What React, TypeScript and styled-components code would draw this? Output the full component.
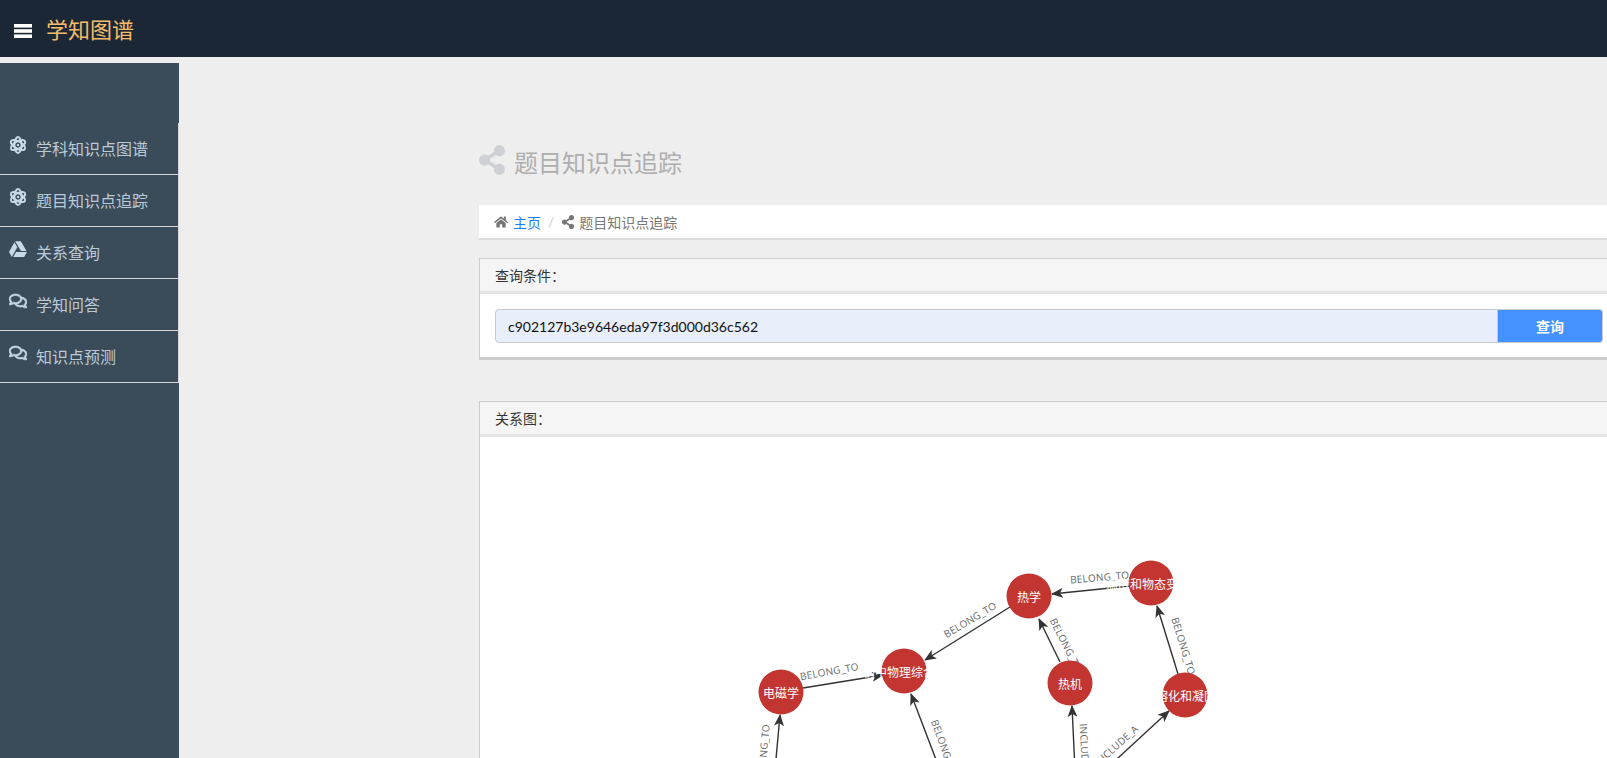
import React from "react";
import styled, { createGlobalStyle } from "styled-components";
import { FaGoogleDrive, FaRegComments, FaShareAlt, FaHome } from "react-icons/fa";

const Global = createGlobalStyle`
  html, body { margin: 0; padding: 0; height: 100%; overflow: hidden; background: #eeeeee; }
  body { font-family: Lato, "Noto Sans CJK SC", sans-serif; font-size: 14px; color: #333; }
  * { box-sizing: border-box; }
`;

const Page = styled.div`
  width: 1607px;
  height: 758px;
  display: flex;
  flex-direction: column;
  overflow: hidden;
`;
const Header = styled.header`
  flex: 0 0 57px;
  background: #1b2735;
  display: flex;
  align-items: center;
  padding-left: 14px;
  gap: 14px;
  color: #fff;
`;
const MenuBars = styled.svg`
  width: 18px;
  height: 14px;
  margin-top: 5px;
  fill: #fff;
`;
const Brand = styled.div`
  color: #f5bd6a;
  font-size: 22px;
  line-height: 1;
  margin-top: 2px;
`;
const Body = styled.div`
  flex: 1;
  display: flex;
  min-height: 0;
  padding-top: 6px;
`;
const Sidebar = styled.aside`
  flex: 0 0 179px;
  background: #3a4b5a;
  padding-top: 60px;
`;
const Menu = styled.ul`
  list-style: none;
  margin: 0;
  padding: 0;
  width: 178px;
  box-shadow: 1px 0 0 #d8d8d8;
`;
const MenuItem = styled.li`
  height: 52px;
  border-bottom: 1px solid #d5d8da;
  display: flex;
  align-items: center;
  padding: 0 0 2px 9px;
  color: #bccad6;
  font-size: 16px;
`;
const MenuIcon = styled.span`
  flex: 0 0 27px;
  height: 18px;
  display: flex;
  margin-top: -5px;
  color: #c9d8e6;
  font-size: 18px;
`;
const AtomSvg = styled.svg`
  width: 18px;
  height: 18px;
  fill: none;
  stroke: currentColor;
  stroke-width: 2;
`;
const Main = styled.main`
  flex: 0 0 1139px;
  margin-left: 300px;
  padding-top: 74px;
`;
const Title = styled.h1`
  margin: 0;
  height: 52px;
  padding-bottom: 3px;
  display: flex;
  align-items: center;
  gap: 9px;
  font-size: 24px;
  font-weight: 400;
  color: #aeaeae;
  svg { color: #cdd0d5; width: 26px; height: 30px; margin-top: -4px; }
`;
const Crumbs = styled.nav`
  margin-top: 16px;
  height: 35px;
  background: #fff;
  border-bottom: 2px solid #dddddd;
  display: flex;
  align-items: center;
  padding-left: 15px;
  color: #777;
  font-size: 14px;
`;
const CrumbLink = styled.a`
  color: #1a7ff0;
  margin-left: 5px;
`;
const CrumbSep = styled.span`
  color: #ccc;
  margin: 0 7px;
`;
const CrumbText = styled.span`
  margin-left: 4px;
`;
const Panel = styled.section<{ $gap: number }>`
  margin-top: ${(p) => p.$gap}px;
  background: #fff;
  border: 1px solid #cccccc;
`;
const PanelHead = styled.div`
  height: 35px;
  background: #f5f5f5;
  border-bottom: 3px solid #e4e4e4;
  display: flex;
  align-items: center;
  padding-left: 15px;
  font-size: 14px;
  color: #333;
`;
const QueryBody = styled.div`
  height: 66px;
  padding: 15px 15px 0;
  border-bottom: 3px solid #cccccc;
  margin-bottom: -1px;
`;
const InputGroup = styled.div`
  width: 1108px;
  height: 34px;
  display: flex;
`;
const Input = styled.div`
  flex: 1;
  background: #e8effb;
  border: 1px solid #c6c8d2;
  border-radius: 4px 0 0 4px;
  display: flex;
  align-items: center;
  padding-left: 12px;
  font-size: 14px;
  color: #111;
`;
const QueryButton = styled.button`
  flex: 0 0 105px;
  background: #4592ff;
  border: 1px solid #c6c8d2;
  border-left: none;
  border-radius: 0 4px 4px 0;
  color: #fff;
  font: 700 14px Lato, "Noto Sans CJK SC", sans-serif;
`;
const GraphBody = styled.div`
  height: 340px;
`;
const GraphSvg = styled.svg`
  display: block;
  width: 1137px;
  height: 340px;
`;
const EdgeLine = styled.line`
  stroke: #333;
  stroke-width: 1.4;
  marker-end: url(#arrow);
`;
const EdgeLabel = styled.text`
  font: 10px "Open Sans", "Noto Sans CJK SC", sans-serif;
  letter-spacing: 0.2px;
  fill: #666;
  text-anchor: middle;
`;
const NodeDot = styled.circle`
  fill: #c23531;
`;
const NodeText = styled.text`
  font: 12px Lato, "Noto Sans CJK SC", sans-serif;
  fill: #fff;
  text-anchor: middle;
  dominant-baseline: central;
`;

// page coordinates of the graph drawing's origin
const ox = 480;
const oy = 437;

const Atom = () => (
  <AtomSvg viewBox="0 0 18 18">
    <ellipse cx="9" cy="9" rx="3.6" ry="8" />
    <ellipse cx="9" cy="9" rx="3.6" ry="8" transform="rotate(60 9 9)" />
    <ellipse cx="9" cy="9" rx="3.6" ry="8" transform="rotate(120 9 9)" />
    <circle cx="9" cy="9" r="1.2" fill="currentColor" stroke="none" />
  </AtomSvg>
);

const menu = [
  { icon: <Atom />, label: "学科知识点图谱" },
  { icon: <Atom />, label: "题目知识点追踪" },
  { icon: <FaGoogleDrive />, label: "关系查询" },
  { icon: <FaRegComments stroke="currentColor" strokeWidth={20} />, label: "学知问答" },
  { icon: <FaRegComments stroke="currentColor" strokeWidth={20} />, label: "知识点预测" },
];
const edges = [
  [803, 688, 883, 675],
  [1010, 607, 925, 660],
  [1130, 586, 1052, 594],
  [1060, 662, 1039, 619],
  [1178, 674, 1157, 606],
  [775, 770, 780, 715],
  [940, 770, 911, 694],
  [1075, 770, 1072, 706],
  [1105, 770, 1169, 711],
];
const labels: [string, number, number, number][] = [
  ["BELONG_TO", 830, 675, -10],
  ["BELONG_TO", 972, 623, -31],
  ["BELONG_TO", 1100, 581, -5],
  ["BELONG_TO", 1063, 647, 63],
  ["BELONG_TO", 1180, 647, 73],
  ["BELONG_TO", 767, 754, -85],
  ["BELONG_TO", 941, 749, 70],
  ["INCLUDE_A", 1081, 751, 87],
  ["INCLUDE_A", 1119, 748, -42],
];
// label, circle x, circle y, label centre x
const nodes: [string, number, number, number][] = [
  ["电磁学", 781, 692, 781],
  ["初中物理综合", 904, 671, 899],
  ["热学", 1029, 596, 1029],
  ["温度和物态变化", 1151, 583, 1148],
  ["热机", 1070, 683, 1070],
  ["熔化和凝固", 1185, 695, 1186],
];

export default function App() {
  return (
    <Page>
      <Global />
      <Header>
        <MenuBars viewBox="0 0 18 14">
          <rect y="0" width="18" height="3.6" />
          <rect y="5.2" width="18" height="3.6" />
          <rect y="10.4" width="18" height="3.6" />
        </MenuBars>
        <Brand>学知图谱</Brand>
      </Header>
      <Body>
        <Sidebar>
          <Menu>
            {menu.map((m) => (
              <MenuItem key={m.label}>
                <MenuIcon>{m.icon}</MenuIcon>
                {m.label}
              </MenuItem>
            ))}
          </Menu>
        </Sidebar>
        <Main>
          <Title>
            <FaShareAlt />
            题目知识点追踪
          </Title>
          <Crumbs>
            <FaHome />
            <CrumbLink>主页</CrumbLink>
            <CrumbSep>/</CrumbSep>
            <FaShareAlt />
            <CrumbText>题目知识点追踪</CrumbText>
          </Crumbs>
          <Panel $gap={18}>
            <PanelHead>查询条件：</PanelHead>
            <QueryBody>
              <InputGroup>
                <Input>c902127b3e9646eda97f3d000d36c562</Input>
                <QueryButton>查询</QueryButton>
              </InputGroup>
            </QueryBody>
          </Panel>
          <Panel $gap={41}>
            <PanelHead>关系图：</PanelHead>
            <GraphBody>
              <GraphSvg viewBox={`${ox} ${oy} 1137 340`}>
                <defs>
                  <marker id="arrow" viewBox="0 0 12 10" refX="11" refY="5" markerWidth="12" markerHeight="10" markerUnits="userSpaceOnUse" orient="auto">
                    <path d="M0 0 L12 5 L0 10 L3 5 Z" fill="#333" />
                  </marker>
                </defs>
                {edges.map((e, i) => (
                  <EdgeLine key={i} x1={e[0]} y1={e[1]} x2={e[2]} y2={e[3]} />
                ))}
                {labels.map(([t, x, y, r], i) => (
                  <EdgeLabel key={i} x={x} y={y} transform={`rotate(${r} ${x} ${y})`}>
                    {t}
                  </EdgeLabel>
                ))}
                {nodes.map(([t, x, y]) => (
                  <NodeDot key={t} cx={x} cy={y} r={22.5} />
                ))}
                {nodes.map(([t, x, y, tx]) => (
                  <NodeText key={t} x={tx} y={y + 1}>
                    {t}
                  </NodeText>
                ))}
              </GraphSvg>
            </GraphBody>
          </Panel>
        </Main>
      </Body>
    </Page>
  );
}
